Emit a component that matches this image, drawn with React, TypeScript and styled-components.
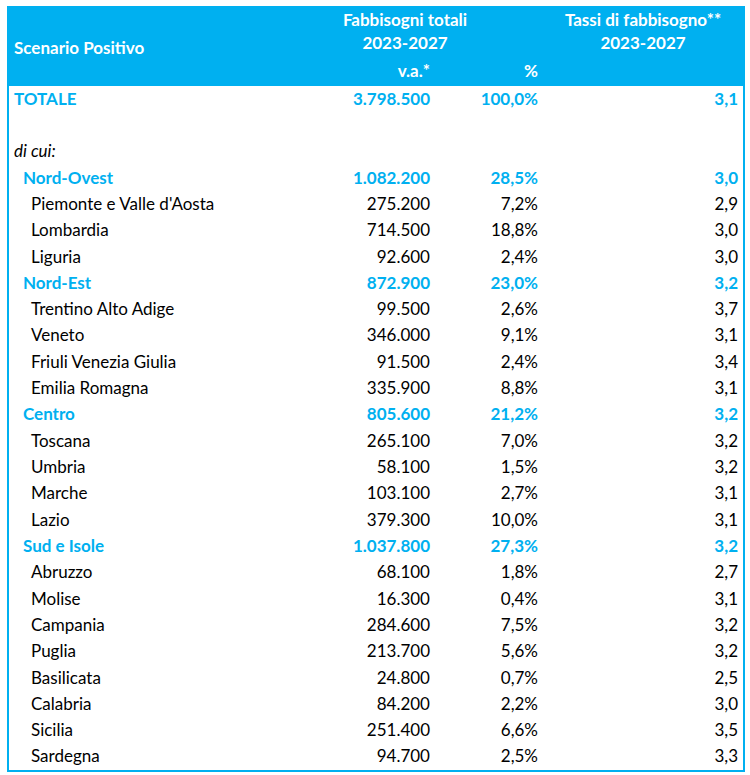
import { createGlobalStyle, styled } from "styled-components";

const BLUE = "#00b0f0";

const GlobalStyle = createGlobalStyle`
  body {
    margin: 0;
    background: #ffffff;
    font-family: Lato, "Open Sans", sans-serif;
  }
`;

const Page = styled.div`
  padding: 6px 0 0 7px;
`;

const Box = styled.div`
  width: 738px;
  box-sizing: border-box;
  border: 2px solid ${BLUE};
`;

const cols = "321px 100px 108px 200px";

const Header = styled.div`
  display: grid;
  grid-template-columns: ${cols};
  grid-template-rows: 23px 23px 28px;
  padding: 0 5px 4px 0;
  height: 78px;
  box-sizing: border-box;
  background: ${BLUE};
  color: #ffffff;
  font-weight: 700;
  font-size: 17px;
  line-height: 23px;
`;

const Title = styled.div`
  grid-column: 1;
  grid-row: 1 / 4;
  align-self: center;
  padding-left: 5px;
  margin-top: 4px;
`;

const GroupHead = styled.div<{ $col: string; $shift: string }>`
  grid-column: ${(p) => p.$col};
  grid-row: 1 / 3;
  text-align: center;
  white-space: nowrap;
  padding: ${(p) => p.$shift};
`;

const SubHead = styled.div<{ $col: number }>`
  grid-column: ${(p) => p.$col};
  grid-row: 3;
  text-align: right;
  align-self: end;
`;

const Row = styled.div<{ $kind: "total" | "area" | "region" | "plain" }>`
  display: grid;
  grid-template-columns: ${cols};
  padding: 0 5px 2px 0;
  height: 26.32px;
  box-sizing: border-box;
  align-items: center;
  font-size: 17px;
  font-weight: ${(p) => (p.$kind === "total" || p.$kind === "area" ? 700 : 400)};
  color: ${(p) => (p.$kind === "total" || p.$kind === "area" ? BLUE : "#000000")};
`;

const Label = styled.div<{ $indent: number; $italic?: boolean }>`
  padding-left: ${(p) => p.$indent}px;
  font-style: ${(p) => (p.$italic ? "italic" : "normal")};
  white-space: nowrap;
`;

const Num = styled.div`
  text-align: right;
`;

type Line = {
  name: string;
  va?: string;
  pct?: string;
  rate?: string;
  kind: "total" | "area" | "region" | "plain";
  italic?: boolean;
};

const lines: Line[] = [
  { name: "TOTALE", va: "3.798.500", pct: "100,0%", rate: "3,1", kind: "total" },
  { name: "", kind: "plain" },
  { name: "di cui:", kind: "plain", italic: true },
  { name: "Nord-Ovest", va: "1.082.200", pct: "28,5%", rate: "3,0", kind: "area" },
  { name: "Piemonte e Valle d'Aosta", va: "275.200", pct: "7,2%", rate: "2,9", kind: "region" },
  { name: "Lombardia", va: "714.500", pct: "18,8%", rate: "3,0", kind: "region" },
  { name: "Liguria", va: "92.600", pct: "2,4%", rate: "3,0", kind: "region" },
  { name: "Nord-Est", va: "872.900", pct: "23,0%", rate: "3,2", kind: "area" },
  { name: "Trentino Alto Adige", va: "99.500", pct: "2,6%", rate: "3,7", kind: "region" },
  { name: "Veneto", va: "346.000", pct: "9,1%", rate: "3,1", kind: "region" },
  { name: "Friuli Venezia Giulia", va: "91.500", pct: "2,4%", rate: "3,4", kind: "region" },
  { name: "Emilia Romagna", va: "335.900", pct: "8,8%", rate: "3,1", kind: "region" },
  { name: "Centro", va: "805.600", pct: "21,2%", rate: "3,2", kind: "area" },
  { name: "Toscana", va: "265.100", pct: "7,0%", rate: "3,2", kind: "region" },
  { name: "Umbria", va: "58.100", pct: "1,5%", rate: "3,2", kind: "region" },
  { name: "Marche", va: "103.100", pct: "2,7%", rate: "3,1", kind: "region" },
  { name: "Lazio", va: "379.300", pct: "10,0%", rate: "3,1", kind: "region" },
  { name: "Sud e Isole", va: "1.037.800", pct: "27,3%", rate: "3,2", kind: "area" },
  { name: "Abruzzo", va: "68.100", pct: "1,8%", rate: "2,7", kind: "region" },
  { name: "Molise", va: "16.300", pct: "0,4%", rate: "3,1", kind: "region" },
  { name: "Campania", va: "284.600", pct: "7,5%", rate: "3,2", kind: "region" },
  { name: "Puglia", va: "213.700", pct: "5,6%", rate: "3,2", kind: "region" },
  { name: "Basilicata", va: "24.800", pct: "0,7%", rate: "2,5", kind: "region" },
  { name: "Calabria", va: "84.200", pct: "2,2%", rate: "3,0", kind: "region" },
  { name: "Sicilia", va: "251.400", pct: "6,6%", rate: "3,5", kind: "region" },
  { name: "Sardegna", va: "94.700", pct: "2,5%", rate: "3,3", kind: "region" },
];

const indentFor = (l: Line) => (l.kind === "area" ? 14 : l.kind === "region" ? 22 : 5);

export default function App() {
  return (
    <Page>
      <GlobalStyle />
      <Box>
        <Header>
          <Title>Scenario Positivo</Title>
          <GroupHead $col="2 / 4" $shift="0 58px 0 0">
            Fabbisogni totali
            <br />
            2023-2027
          </GroupHead>
          <GroupHead $col="4" $shift="0 0 0 10px">
            Tassi di fabbisogno**
            <br />
            2023-2027
          </GroupHead>
          <SubHead $col={2}>v.a.*</SubHead>
          <SubHead $col={3}>%</SubHead>
        </Header>
        {lines.map((l, i) => (
          <Row key={i} $kind={l.kind}>
            <Label $indent={indentFor(l)} $italic={l.italic}>
              {l.name}
            </Label>
            <Num>{l.va}</Num>
            <Num>{l.pct}</Num>
            <Num>{l.rate}</Num>
          </Row>
        ))}
      </Box>
    </Page>
  );
}
